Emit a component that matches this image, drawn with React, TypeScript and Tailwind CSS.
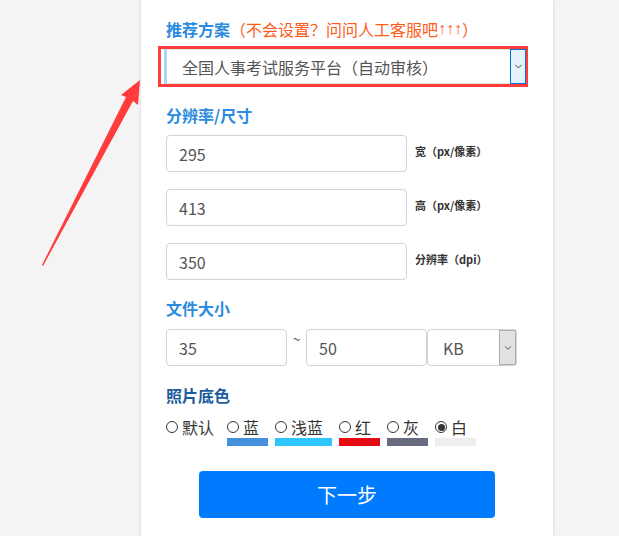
import { ChevronDown } from 'lucide-react';

const font = { fontFamily: '"Noto Sans CJK SC", "Noto Sans", sans-serif' };

const colors = [
  { label: '默认', bar: '', w: 'w-[54px]' },
  { label: '蓝', bar: 'bg-[#4590db]', w: 'w-[41px]' },
  { label: '浅蓝', bar: 'bg-[#2ec4fc]', w: 'w-[57px]' },
  { label: '红', bar: 'bg-[#e60a14]', w: 'w-[41px]' },
  { label: '灰', bar: 'bg-[#666b7d]', w: 'w-[41px]' },
  { label: '白', bar: 'bg-[#eeeeee]', w: 'w-[41px]', checked: true },
];

function SizeRow({ value, label }: { value: string; label: string }) {
  return (
    <div className="flex items-start">
      <div className="w-[241px] h-[37px] rounded border border-[#ced4da] flex items-center pl-[12px] text-[16px] text-[#555]">
        {value}
      </div>
      <div className="ml-[8px] mt-[8px] text-[11px] font-bold text-[#333]">{label}</div>
    </div>
  );
}

export default function App() {
  return (
    <div className="relative w-[619px] h-[536px] overflow-hidden bg-[#f4f4f4] flex" style={font}>
      <div className="w-[141px] shrink-0" />
      <div className="w-[412px] h-full bg-white shadow-[0_0_3px_rgba(0,0,0,0.15)] pl-[25px] pt-[17px]">
        {/* recommended scheme */}
        <div className="h-[24px] flex items-center text-[16px] whitespace-nowrap">
          <span className="text-[#2a8be0] font-bold">推荐方案</span>
          <span className="text-[#ff5a1a]">（不会设置？问问人工客服吧</span>
          <span className="text-[#ff5a1a] text-[16px]" style={{ fontFamily: '"Liberation Sans", sans-serif' }}>↑↑↑</span>
          <span className="text-[#ff5a1a]">）</span>
        </div>
        <div className="mt-[5px] -ml-[8px] w-[370px] h-[41px] border-[3px] border-[#ff3b3b] flex">
          <div className="ml-[3px] flex-1 flex items-center border-l-[3px] border-[#a9d4fb] border-y border-y-[#e3e3e3]">
            <span className="pl-[15px] text-[16px] text-[#555]">全国人事考试服务平台（自动审核）</span>
          </div>
          <div className="w-[16px] -mr-[1px] bg-[#e5f1fb] border border-[#0078d7] flex items-center justify-center">
            <ChevronDown className="w-[11px] h-[11px] text-[#333]" strokeWidth={2} />
          </div>
        </div>

        {/* resolution / size */}
        <div className="mt-[16px] text-[16px] leading-[24px] font-bold text-[#2a8be0]">分辨率/尺寸</div>
        <div className="mt-[8px] flex flex-col gap-[17px]">
          <SizeRow value="295" label="宽（px/像素）" />
          <SizeRow value="413" label="高（px/像素）" />
          <SizeRow value="350" label="分辨率（dpi）" />
        </div>

        {/* file size */}
        <div className="mt-[16px] text-[16px] leading-[24px] font-bold text-[#2a8be0]">文件大小</div>
        <div className="mt-[9px] flex items-start">
          <div className="w-[121px] h-[37px] rounded border border-[#ced4da] flex items-center pl-[12px] text-[16px] text-[#555]">35</div>
          <div className="w-[19px] text-center text-[13px] text-[#555] leading-[20px]">~</div>
          <div className="w-[121px] h-[37px] rounded border border-[#ced4da] flex items-center pl-[12px] text-[16px] text-[#555]">50</div>
          <div className="w-[90px] h-[37px] rounded border border-[#ced4da] flex">
            <div className="flex-1 flex items-center pl-[15px] text-[16px] text-[#555]">KB</div>
            <div className="w-[17px] bg-[#e1e1e1] border border-[#adadad] flex items-center justify-center">
              <ChevronDown className="w-[10px] h-[10px] text-[#333]" strokeWidth={2} />
            </div>
          </div>
        </div>

        {/* background colour */}
        <div className="mt-[17px] text-[16px] leading-[24px] font-bold text-[#1a5c9e]">照片底色</div>
        <div className="mt-[10px] flex gap-[7px]">
          {colors.map((c) => (
            <div key={c.label} className={`${c.w} flex flex-col`}>
              <div className="flex items-center h-[20px] text-[16px] text-[#333]">
                <span className="w-[12px] h-[12px] rounded-full border border-[#333] flex items-center justify-center mr-[4px]">
                  {c.checked && <span className="w-[7px] h-[7px] rounded-full bg-[#333]" />}
                </span>
                {c.label}
              </div>
              <div className={`mt-[1px] h-[8px] ${c.bar}`} />
            </div>
          ))}
        </div>

        <div className="mt-[25px] ml-[33px] w-[296px] h-[47px] rounded bg-[#007bff] flex items-center justify-center text-white text-[20px]">
          下一步
        </div>
      </div>
      <div className="flex-1" />

      {/* pointer arrow */}
      <svg className="absolute left-0 top-0" width="160" height="280">
        <polygon
          points="42,265 126,97 121,95 140,80 138,105 133,101 43,266"
          fill="#ff3b3b"
        />
      </svg>
    </div>
  );
}
